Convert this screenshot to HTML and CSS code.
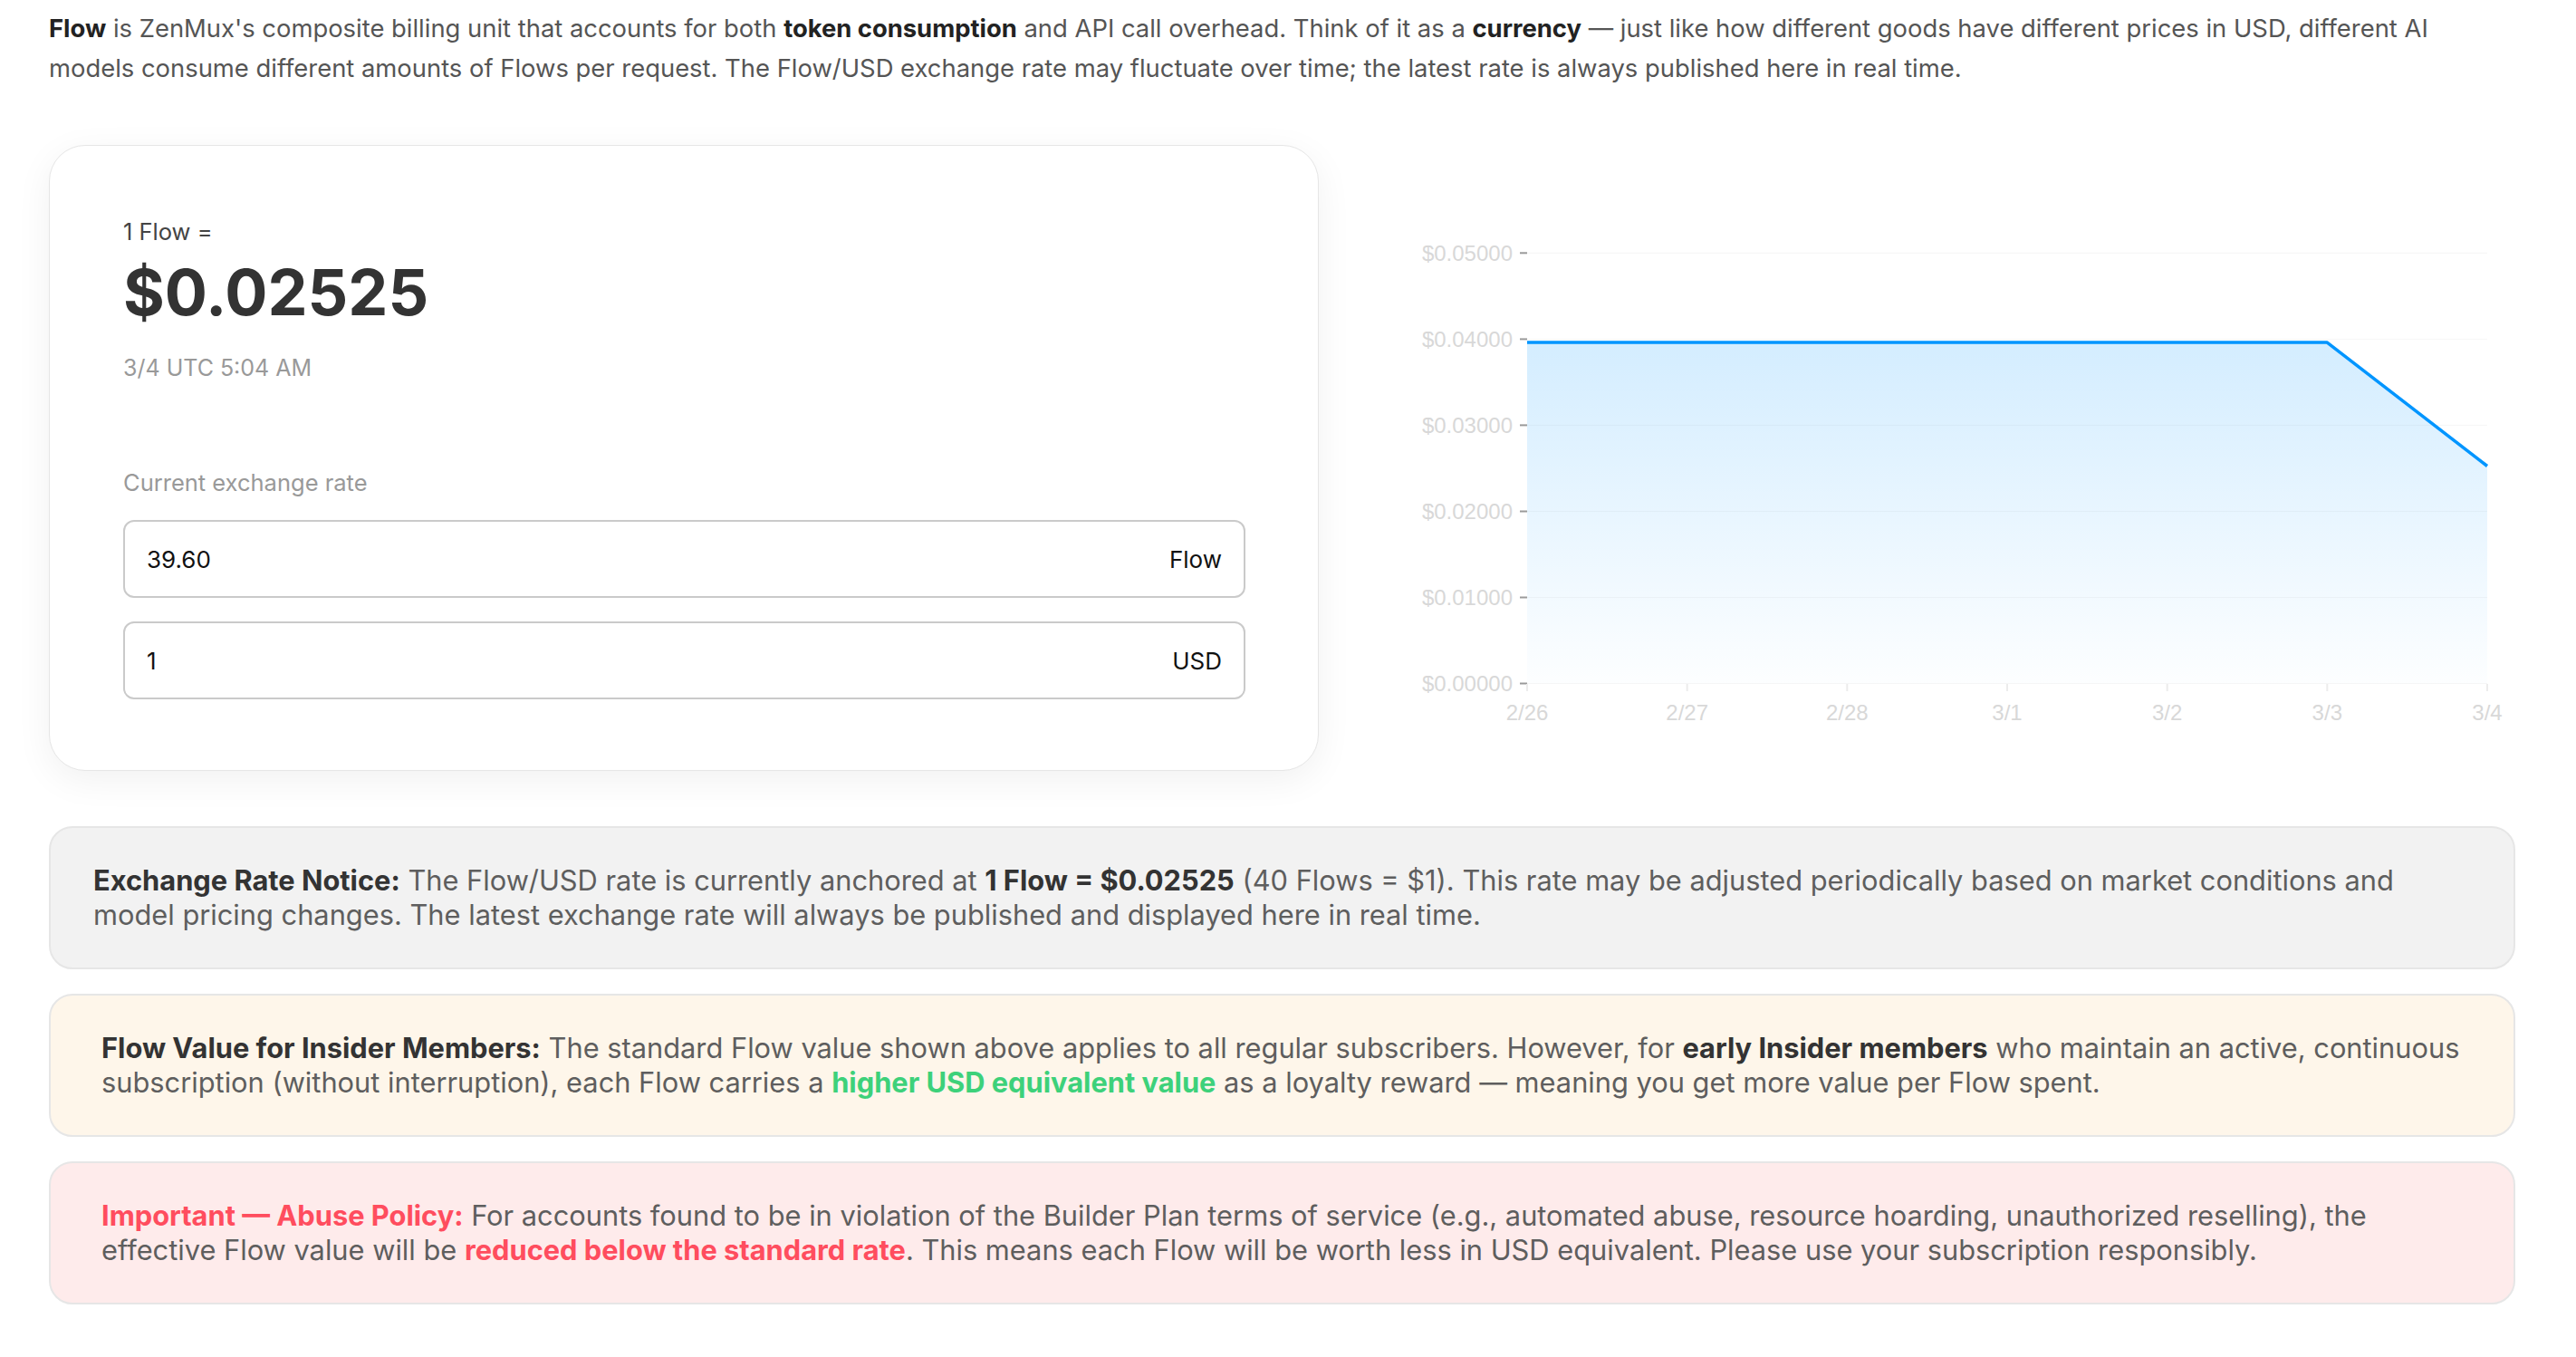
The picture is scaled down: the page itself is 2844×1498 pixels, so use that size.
FILE: index.html
```html
<!DOCTYPE html>
<html lang="en">
<head>
  <meta charset="UTF-8" />
  <meta name="viewport" content="width=device-width, initial-scale=1.0"/>
  <title>Flow Exchange Rate</title>
  <link rel="stylesheet" href="styles.css">
</head>
<body>
  <div class="page">
    <p class="intro">
      <strong>Flow</strong> is ZenMux's composite billing unit that accounts for both <strong>token consumption</strong> and API call overhead. Think of it as a <strong>currency</strong> — just like how different goods have different prices in USD, different AI models consume different amounts of Flows per request. The Flow/USD exchange rate may fluctuate over time; the latest rate is always published here in real time.
    </p>

    <div class="rate-row">
      <div class="rate-card">
        <div class="rate-label">1 Flow =</div>
        <div class="rate-value">$0.02525</div>
        <div class="rate-time">3/4 UTC 5:04 AM</div>

        <div class="field-label">Current exchange rate</div>
        <div class="field">
          <input type="text" value="39.60">
          <span>Flow</span>
        </div>
        <div class="field">
          <input type="text" value="1">
          <span>USD</span>
        </div>
      </div>

      <div class="chart">
        <svg width="1321" height="691" viewBox="0 0 1321 691">
          <defs>
            <linearGradient id="area" x1="0" y1="0" x2="0" y2="1">
              <stop offset="0%" stop-color="#0095ff" stop-opacity="0.17"/>
              <stop offset="100%" stop-color="#0095ff" stop-opacity="0.01"/>
            </linearGradient>
          </defs>

          <!-- grid -->
          <g stroke="#f6f6f6" stroke-width="1">
            <line x1="230" y1="119.3" x2="1290" y2="119.3"/>
            <line x1="230" y1="214.4" x2="1290" y2="214.4"/>
            <line x1="230" y1="309.4" x2="1290" y2="309.4"/>
            <line x1="230" y1="404.5" x2="1290" y2="404.5"/>
            <line x1="230" y1="499.5" x2="1290" y2="499.5"/>
            <line x1="230" y1="594.5" x2="1290" y2="594.5"/>
          </g>

          <path d="M230,218.1 L1113.3,218.1 L1290,354.5 L1290,594.5 L230,594.5 Z" fill="url(#area)"/>
          <polyline points="230,218.1 1113.3,218.1 1290,354.5" fill="none" stroke="#0095ff" stroke-width="3.5" stroke-linejoin="round"/>

          <!-- y axis -->
          <g stroke="#9a9a9a" stroke-width="2">
            <line x1="222" y1="119.3" x2="230" y2="119.3"/>
            <line x1="222" y1="214.4" x2="230" y2="214.4"/>
            <line x1="222" y1="309.4" x2="230" y2="309.4"/>
            <line x1="222" y1="404.5" x2="230" y2="404.5"/>
            <line x1="222" y1="499.5" x2="230" y2="499.5"/>
            <line x1="222" y1="594.5" x2="230" y2="594.5"/>
          </g>
          <g class="axis-text" text-anchor="end">
            <text x="214" y="127.5">$0.05000</text>
            <text x="214" y="222.6">$0.04000</text>
            <text x="214" y="317.6">$0.03000</text>
            <text x="214" y="412.7">$0.02000</text>
            <text x="214" y="507.7">$0.01000</text>
            <text x="214" y="602.7">$0.00000</text>
          </g>

          <!-- x axis -->
          <g stroke="#ececec" stroke-width="2">
            <line x1="230" y1="595" x2="230" y2="603"/>
            <line x1="406.7" y1="595" x2="406.7" y2="603"/>
            <line x1="583.3" y1="595" x2="583.3" y2="603"/>
            <line x1="760" y1="595" x2="760" y2="603"/>
            <line x1="936.7" y1="595" x2="936.7" y2="603"/>
            <line x1="1113.3" y1="595" x2="1113.3" y2="603"/>
            <line x1="1290" y1="595" x2="1290" y2="603"/>
          </g>
          <g class="axis-text" text-anchor="middle">
            <text x="230" y="635">2/26</text>
            <text x="406.7" y="635">2/27</text>
            <text x="583.3" y="635">2/28</text>
            <text x="760" y="635">3/1</text>
            <text x="936.7" y="635">3/2</text>
            <text x="1113.3" y="635">3/3</text>
            <text x="1290" y="635">3/4</text>
          </g>
        </svg>
      </div>
    </div>

    <div class="notice notice-gray">
      <strong>Exchange Rate Notice:</strong> The Flow/USD rate is currently anchored at <strong>1 Flow = $0.02525</strong> (40 Flows = $1). This rate may be adjusted periodically based on market conditions and model pricing changes. The latest exchange rate will always be published and displayed here in real time.
    </div>

    <div class="notice notice-warm">
      <strong>Flow Value for Insider Members:</strong> The standard Flow value shown above applies to all regular subscribers. However, for <strong>early Insider members</strong> who maintain an active, continuous subscription (without interruption), each Flow carries a <strong class="green">higher USD equivalent value</strong> as a loyalty reward — meaning you get more value per Flow spent.
    </div>

    <div class="notice notice-red">
      <strong class="red">Important — Abuse Policy:</strong> For accounts found to be in violation of the Builder Plan terms of service (e.g., automated abuse, resource hoarding, unauthorized reselling), the effective Flow value will be <strong class="red">reduced below the standard rate</strong>. This means each Flow will be worth less in USD equivalent. Please use your subscription responsibly.
    </div>
  </div>
</body>
</html>
```

FILE: styles.css
```css
body {
  margin: 0;
  background: #fff;
  font-family: Inter, "Noto Sans", Arial, sans-serif;
  color: #555;
}

.page {
  width: 2723px;
  padding: 10px 0 60px 54px;
}

.intro {
  margin: 0 40px 0 0;
  font-size: 27.4px;
  line-height: 43.5px;
  color: #555;
}

.intro strong {
  color: #222;
  font-weight: 700;
}

.rate-row {
  display: grid;
  grid-template-columns: 1402px 1fr;
  margin-top: 63px;
}

.rate-card {
  border: 1px solid #e6e6e6;
  border-radius: 40px;
  padding: 80px 80px 78px 81px;
  background: #fff;
  box-shadow: 0 10px 40px rgba(0, 0, 0, 0.06);
}

.rate-label {
  font-size: 25.5px;
  line-height: 30px;
  color: #444;
}

.rate-value {
  margin-top: 12px;
  font-size: 70px;
  line-height: 80px;
  font-weight: 700;
  color: #333;
}

.rate-time {
  margin-top: 28px;
  font-size: 25px;
  line-height: 30px;
  color: #999;
}

.field-label {
  margin-top: 97px;
  font-size: 25.5px;
  line-height: 30px;
  color: #999;
}

.field {
  display: flex;
  align-items: center;
  height: 86px;
  box-sizing: border-box;
  margin-top: 26px;
  padding: 0 24px;
  border: 2px solid #cacaca;
  border-radius: 12px;
}

.field input {
  flex: 1;
  border: none;
  outline: none;
  padding: 0;
  font-family: inherit;
  font-size: 26px;
  color: #111;
  background: transparent;
}

.field span {
  font-size: 26px;
  color: #111;
}

.chart svg {
  display: block;
}

.axis-text {
  font-family: "Liberation Sans", Arial, sans-serif;
  font-size: 24px;
  fill: #d8d8d8;
}

.notice {
  margin-top: 27px;
  border: 2px solid #e6e6e6;
  border-radius: 26px;
  padding: 39px 56px;
  font-size: 30.8px;
  line-height: 38px;
  color: #5e5e5e;
}

.notice strong {
  color: #333;
  font-weight: 700;
}

.notice-gray {
  margin-top: 61px;
  padding-left: 47px;
  background: #f2f2f2;
}

.notice-warm {
  background: #fef6ea;
}

.notice-red {
  background: #feebeb;
}

.notice strong.green {
  color: #3dd17a;
}

.notice strong.red {
  color: #ff4d5e;
}
```
